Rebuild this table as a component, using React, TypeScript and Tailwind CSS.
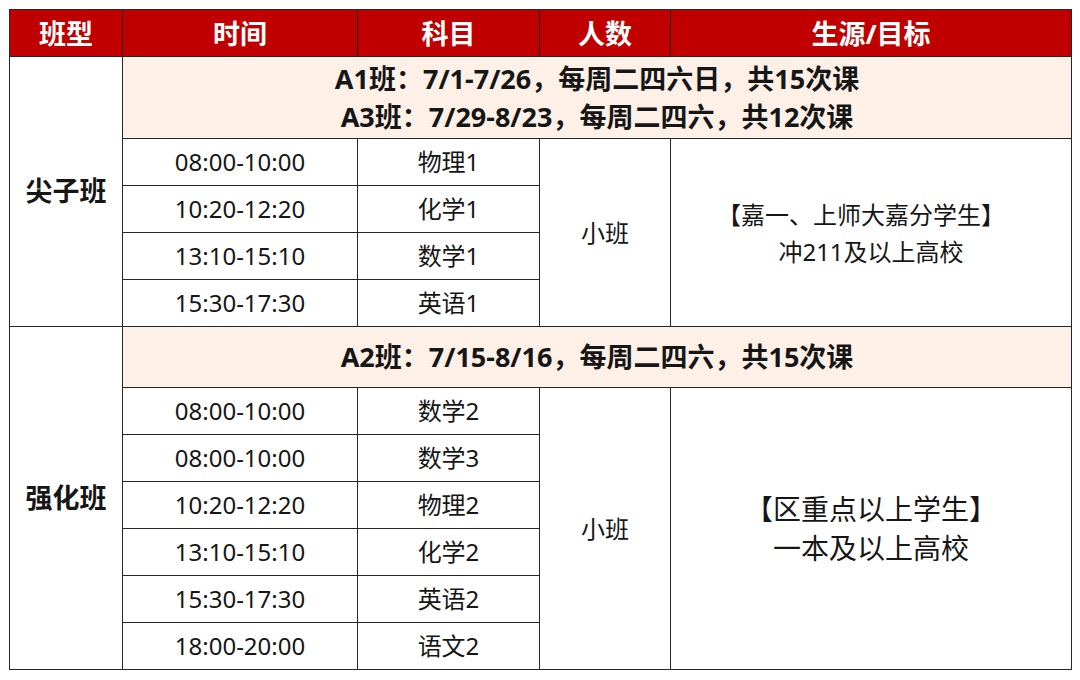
import React from 'react';

interface Lesson {
  time: string;
  subject: string;
}

interface ClassBlock {
  name: string;
  schedules: string[];
  lessons: Lesson[];
  size: string;
  target: string[];
  targetSize: string;
  firstLineShift: string;
}

const blocks: ClassBlock[] = [
  {
    name: '尖子班',
    schedules: ['A1班：7/1-7/26，每周二四六日，共15次课', 'A3班：7/29-8/23，每周二四六，共12次课'],
    lessons: [
      { time: '08:00-10:00', subject: '物理1' },
      { time: '10:20-12:20', subject: '化学1' },
      { time: '13:10-15:10', subject: '数学1' },
      { time: '15:30-17:30', subject: '英语1' }
    ],
    size: '小班',
    target: ['【嘉一、上师大嘉分学生】', '冲211及以上高校'],
    targetSize: 'text-[24px] leading-[37px]',
    firstLineShift: 'pr-[20px]'
  },
  {
    name: '强化班',
    schedules: ['A2班：7/15-8/16，每周二四六，共15次课'],
    lessons: [
      { time: '08:00-10:00', subject: '数学2' },
      { time: '08:00-10:00', subject: '数学3' },
      { time: '10:20-12:20', subject: '物理2' },
      { time: '13:10-15:10', subject: '化学2' },
      { time: '15:30-17:30', subject: '英语2' },
      { time: '18:00-20:00', subject: '语文2' }
    ],
    size: '小班',
    target: ['【区重点以上学生】', '一本及以上高校'],
    targetSize: 'text-[28px] leading-[39px]',
    firstLineShift: ''
  }
];

const headers = ['班型', '时间', '科目', '人数', '生源/目标'];

const cell = 'border border-[#262626] text-center align-middle p-0';

export default function App() {
  return (
    <div
      className="w-[1080px] h-[680px] bg-white pt-[9px] pl-[9px]"
      style={{ fontFamily: '"Noto Sans", "Noto Sans CJK SC", sans-serif' }}
    >
      <table className="table-fixed border-collapse w-[1062px] text-[#161616]">
        <colgroup>
          <col className="w-[113px]" />
          <col className="w-[235px]" />
          <col className="w-[182px]" />
          <col className="w-[131px]" />
          <col className="w-[401px]" />
        </colgroup>
        <thead>
          <tr className="h-[47px] bg-[#c00000]">
            {headers.map((h) => (
              <th key={h} className={`${cell} text-white text-[27px] font-bold leading-none`}>
                {h}
              </th>
            ))}
          </tr>
        </thead>
        <tbody>
          {blocks.map((block) => {
            const rowSpan = block.lessons.length + 1;
            return (
              <React.Fragment key={block.name}>
                {/* Schedule band */}
                <tr className={block.schedules.length > 1 ? 'h-[82px]' : 'h-[61px]'}>
                  <td rowSpan={rowSpan} className={`${cell} text-[27px] font-bold`}>
                    {block.name}
                  </td>
                  <td colSpan={4} className={`${cell} bg-[#fdf0e7] text-[27px] font-bold leading-[38px]`}>
                    {block.schedules.map((s) => (
                      <div key={s}>{s}</div>
                    ))}
                  </td>
                </tr>
                {block.lessons.map((lesson, i) => (
                  <tr key={i} className="h-[47px]">
                    <td className={`${cell} text-[24px] leading-none`}>{lesson.time}</td>
                    <td className={`${cell} text-[24px] leading-none`}>{lesson.subject}</td>
                    {i === 0 && (
                      <>
                        <td rowSpan={block.lessons.length} className={`${cell} text-[24px]`}>
                          {block.size}
                        </td>
                        <td rowSpan={block.lessons.length} className={`${cell} ${block.targetSize}`}>
                          {block.target.map((t, j) => (
                            <div key={t} className={j === 0 ? block.firstLineShift : ''}>
                              {t}
                            </div>
                          ))}
                        </td>
                      </>
                    )}
                  </tr>
                ))}
              </React.Fragment>
            );
          })}
        </tbody>
      </table>
    </div>
  );
}
